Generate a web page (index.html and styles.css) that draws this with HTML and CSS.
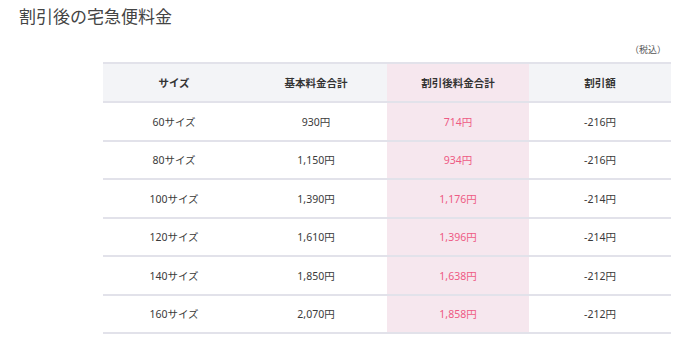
FILE: index.html
```html
<!DOCTYPE html>
<html lang="ja">
<head>
<meta charset="utf-8">
<link rel="stylesheet" href="styles.css">
</head>
<body>
<h2 class="title">割引後の宅急便料金</h2>
<div class="wrap">
  <p class="note">（税込）</p>
  <table class="fee">
    <thead>
      <tr><th>サイズ</th><th>基本料金合計</th><th class="hl">割引後料金合計</th><th>割引額</th></tr>
    </thead>
    <tbody>
      <tr><td>60サイズ</td><td>930円</td><td class="hl">714円</td><td>-216円</td></tr>
      <tr><td>80サイズ</td><td>1,150円</td><td class="hl">934円</td><td>-216円</td></tr>
      <tr><td>100サイズ</td><td>1,390円</td><td class="hl">1,176円</td><td>-214円</td></tr>
      <tr><td>120サイズ</td><td>1,610円</td><td class="hl">1,396円</td><td>-214円</td></tr>
      <tr><td>140サイズ</td><td>1,850円</td><td class="hl">1,638円</td><td>-212円</td></tr>
      <tr><td>160サイズ</td><td>2,070円</td><td class="hl">1,858円</td><td>-212円</td></tr>
    </tbody>
  </table>
</div>
</body>
</html>
```
FILE: styles.css
```css
html, body {
  margin: 0;
  padding: 0;
  background: #ffffff;
  font-family: "Noto Sans", "Noto Sans CJK JP", sans-serif;
  color: #333333;
}
.title {
  margin: 0;
  padding: 4px 0 0 19px;
  font-size: 17px;
  font-weight: normal;
  line-height: 24px;
  color: #444444;
  font-family: "Noto Sans CJK JP", sans-serif;
}
.wrap {
  margin: 0 30px 0 103px;
  width: 567px;
}
.note {
  margin: 16px 0 0;
  text-align: right;
  font-size: 9px;
  line-height: 12px;
  color: #555555;
  padding-right: 4px;
  font-family: "Noto Sans CJK JP", sans-serif;
}
.fee {
  margin-top: 6px;
  width: 567px;
  border-collapse: collapse;
  table-layout: fixed;
  font-size: 10.5px;
}
.fee th, .fee td {
  padding: 0;
  text-align: center;
  vertical-align: middle;
  border-top: 2px solid #e2e2ea;
  border-bottom: 2px solid #e2e2ea;
  width: 142px;
}
.fee th {
  height: 37px;
  background: #f3f4f7;
  font-weight: bold;
  color: #333333;
}
.fee td {
  height: 36.5px;
  color: #3a3a3a;
}
.fee th.hl, .fee td.hl {
  background: #f6e7ee;
}
.fee td.hl {
  color: #ee5a84;
}
```
